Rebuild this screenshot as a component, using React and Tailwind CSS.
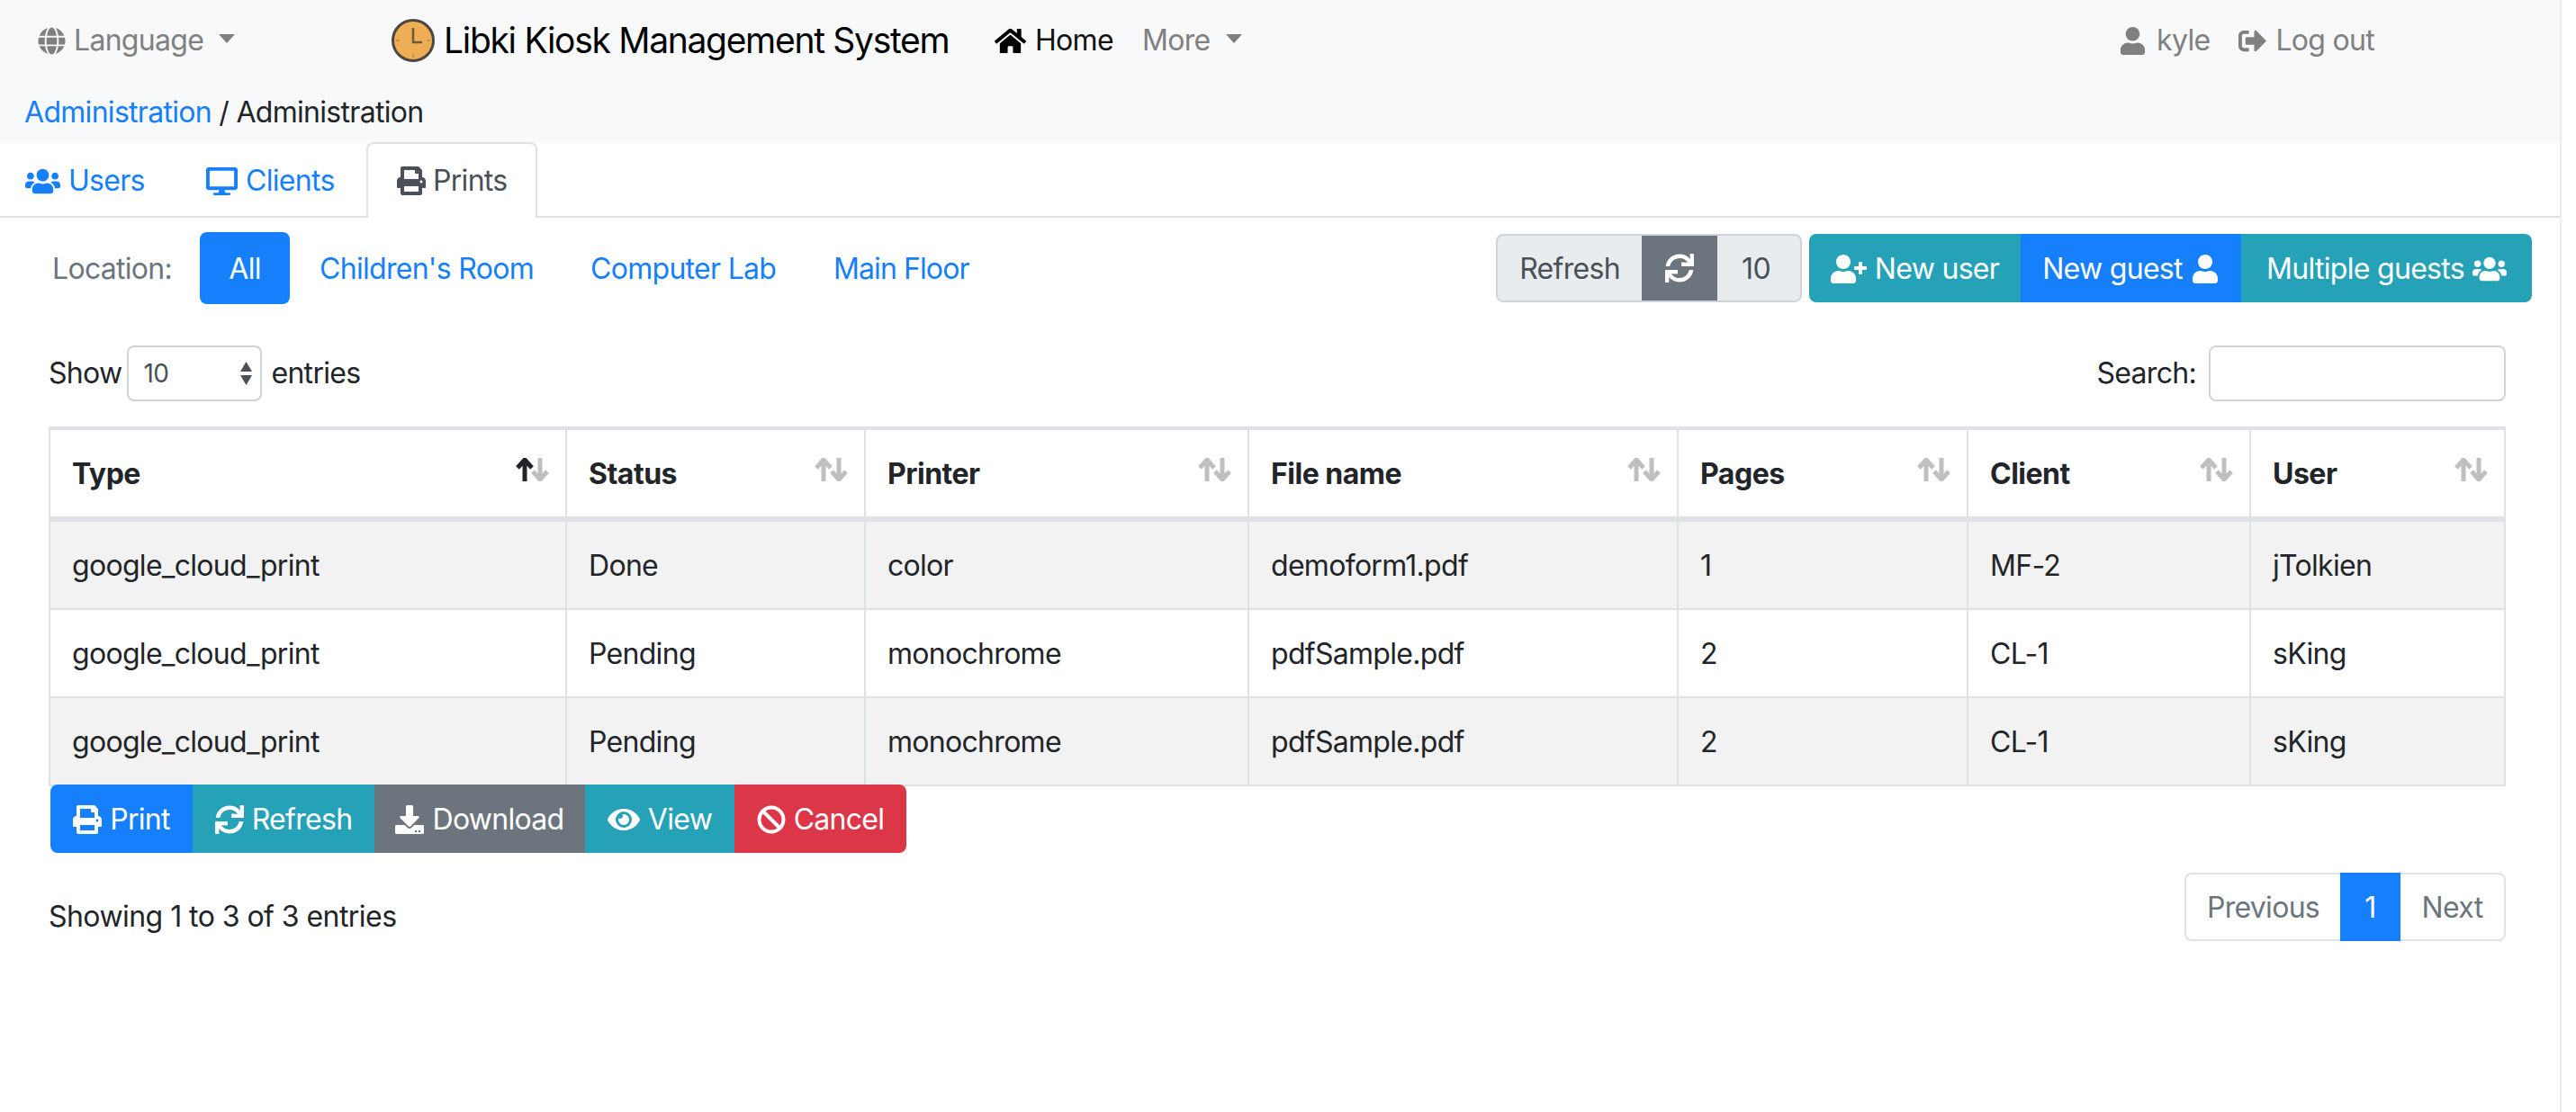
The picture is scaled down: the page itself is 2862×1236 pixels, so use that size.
import React from "react"
import {
  FaBan,
  FaDesktop,
  FaDownload,
  FaEye,
  FaGlobe,
  FaHome,
  FaPrint,
  FaSignOutAlt,
  FaSync,
  FaUser,
  FaUserPlus,
  FaUsers,
} from "react-icons/fa"

const columns = [
  { name: "Type", width: "w-[576px]", sorted: true },
  { name: "Status", width: "w-[332px]" },
  { name: "Printer", width: "w-[426px]" },
  { name: "File name", width: "w-[477px]" },
  { name: "Pages", width: "w-[322px]" },
  { name: "Client", width: "w-[314px]" },
  { name: "User", width: "w-[283px]" },
]

const rows = [
  ["google_cloud_print", "Done", "color", "demoform1.pdf", "1", "MF-2", "jTolkien"],
  ["google_cloud_print", "Pending", "monochrome", "pdfSample.pdf", "2", "CL-1", "sKing"],
  ["google_cloud_print", "Pending", "monochrome", "pdfSample.pdf", "2", "CL-1", "sKing"],
]

function Caret({ className }) {
  return <span className={`w-0 h-0 -mt-[4px] border-x-[9px] border-x-transparent border-t-[10px] border-t-[#7e8081] ${className}`} />
}

function ClockLogo() {
  return (
    <svg width="50" height="50" viewBox="0 0 50 50" className="shrink-0">
      <circle cx="25" cy="25" r="22.5" fill="#efae56" stroke="#4a4640" strokeWidth="3" />
      <path d="M25 11v16h10" fill="none" stroke="#6b5a3a" strokeWidth="2.5" />
      <path d="M25 40v4M6 25h4M40 25h4" fill="none" stroke="#c99247" strokeWidth="2" />
    </svg>
  )
}

function SortArrows({ sorted }) {
  return (
    <svg width="37" height="26" viewBox="0 0 37 26" className={sorted ? "text-[#212529]" : "text-[#bdbfc1]"}>
      <path d="M10 26V5M2 11l8-9 8 9" fill="none" stroke="currentColor" strokeWidth="5" />
      <path d="M27 0v21M19 15l8 9 8-9" fill="none" stroke="#bdbfc1" strokeWidth="5" />
    </svg>
  )
}

function SelectArrows() {
  return (
    <svg width="13" height="26" viewBox="0 0 13 26" className="text-[#495057]">
      <path d="M6.5 0L13 11H0zM6.5 26L0 15h13z" fill="currentColor" />
    </svg>
  )
}

function Navbar() {
  return (
    <div className="h-[90px] flex items-center text-[32px] text-[#7e8081]">
      <div className="w-[434px] pl-[42px] flex items-center shrink-0">
        <FaGlobe className="text-[31px]" />
        <span className="ml-[9px]">Language</span>
        <Caret className="ml-[17px]" />
      </div>
      <ClockLogo />
      <span className="ml-[9px] w-[612px] text-[39px] tracking-[-1.3px] whitespace-nowrap text-black shrink-0">Libki Kiosk Management System</span>
      <FaHome className="text-[35px] text-black shrink-0" />
      <span className="ml-[10px] w-[119px] text-[#111] shrink-0">Home</span>
      <span>More</span>
      <Caret className="ml-[18px]" />
      <div className="ml-auto pr-[206px] flex items-center">
        <FaUser className="text-[31px]" />
        <span className="ml-[11px]">kyle</span>
        <FaSignOutAlt className="ml-[32px] text-[31px]" />
        <span className="ml-[10px]">Log out</span>
      </div>
    </div>
  )
}

function Tabs() {
  return (
    <div className="h-[84px] flex border-b-2 border-[#dee2e6] text-[32px] text-[#167ffc]">
      <a className="w-[197px] h-[84px] pl-7 pt-[2px] flex items-center gap-[9px]">
        <FaUsers className="text-[39px]" />
        Users
      </a>
      <a className="w-[210px] h-[84px] pl-8 pt-[2px] flex items-center gap-[9px]">
        <FaDesktop className="text-[35px]" />
        Clients
      </a>
      <a className="w-[190px] h-[84px] pl-8 flex items-center gap-[8px] bg-white border-2 border-b-0 border-[#dee2e6] rounded-t-lg text-[#495057]">
        <FaPrint className="text-[32px]" />
        Prints
      </a>
    </div>
  )
}

function Toolbar() {
  return (
    <div className="mt-4 h-20 pl-[58px] pr-[31px] flex items-center text-[32px]">
      <span className="w-[164px] pt-[2px] text-[#6c757d]">Location:</span>
      <a className="w-[100px] h-20 pt-[2px] flex items-center justify-center rounded-lg bg-[#167ffc] text-white">All</a>
      <a className="w-[302px] pl-[33px] pt-[2px] text-[#167ffc]">Children's Room</a>
      <a className="w-[272px] pl-[32px] pt-[2px] text-[#167ffc]">Computer Lab</a>
      <a className="pl-[30px] pt-[2px] tracking-[-0.9px] text-[#167ffc]">Main Floor</a>
      <div className="ml-auto flex h-[76px]">
        <div className="flex rounded-lg border-2 border-[#ced4da] bg-[#e9ecef] text-[#495057] overflow-hidden">
          <span className="w-[160px] pt-[2px] flex items-center justify-center">Refresh</span>
          <span className="w-[84px] -my-[2px] flex items-center justify-center bg-[#6c757d] text-white">
            <FaSync className="text-[32px]" />
          </span>
          <span className="w-[92px] pt-[2px] pr-[6px] flex items-center justify-center">10</span>
        </div>
        <div className="ml-2 flex rounded-lg overflow-hidden text-white">
          <a className="w-[235px] pt-[2px] flex items-center justify-center gap-[9px] bg-[#26a2b8]">
            <FaUserPlus className="text-[40px]" />
            New user
          </a>
          <a className="w-[245px] pt-[2px] flex items-center justify-center gap-[9px] bg-[#167ffc]">
            New guest
            <FaUser className="text-[32px]" />
          </a>
          <a className="w-[323px] pt-[2px] flex items-center justify-center gap-[9px] bg-[#26a2b8]">
            Multiple guests
            <FaUsers className="text-[38px]" />
          </a>
        </div>
      </div>
    </div>
  )
}

function TableFilters() {
  return (
    <div className="mt-[46px] h-[62px] ml-[54px] mr-[60px] flex items-center justify-between text-[32px] text-[#212529]">
      <div className="flex items-center">
        <span>Show</span>
        <div className="ml-[6px] w-[150px] h-[62px] pl-4 pr-[9px] flex items-center justify-between rounded-lg border-2 border-[#ced4da] text-[28px] text-[#495057]">
          10
          <SelectArrows />
        </div>
        <span className="ml-[10px]">entries</span>
      </div>
      <div className="flex items-center">
        <span>Search:</span>
        <input className="ml-[14px] w-[330px] h-[62px] rounded-lg border-2 border-[#ced4da] bg-white" />
      </div>
    </div>
  )
}

function PrintsTable() {
  return (
    <table className="mt-7 ml-[54px] w-[2730px] table-fixed border-separate border-spacing-0 text-[32px] text-[#212529]">
      <thead>
        <tr>
          {columns.map((col, i) => (
            <th
              key={col.name}
              className={`${col.width} h-[106px] px-6 pt-[2px] text-left font-bold tracking-[-0.5px] border-t-4 border-b-[6px] border-r-2 border-[#dee2e6] ${i === 0 ? "border-l-2" : ""}`}
            >
              <div className="flex items-center justify-between">
                {col.name}
                <span className="-mr-[6px] -mt-[11px] flex"><SortArrows sorted={col.sorted} /></span>
              </div>
            </th>
          ))}
        </tr>
      </thead>
      <tbody>
        {rows.map((row, r) => (
          <tr key={r} className={r % 2 === 0 ? "bg-[#f2f2f2]" : "bg-white"}>
            {row.map((cell, i) => (
              <td
                key={i}
                className={`h-[98px] px-6 pt-[2px] border-b-2 border-r-2 border-[#dee2e6] ${i === 0 ? "border-l-2" : ""}`}
              >
                {cell}
              </td>
            ))}
          </tr>
        ))}
      </tbody>
    </table>
  )
}

function RowActions() {
  return (
    <div className="-mt-[2px] ml-[56px] w-fit h-[76px] flex rounded-lg overflow-hidden text-[32px] text-white relative">
      <a className="w-[158px] pt-[2px] flex items-center justify-center gap-[9px] bg-[#167ffc]">
        <FaPrint className="text-[32px]" />
        Print
      </a>
      <a className="w-[202px] pt-[2px] flex items-center justify-center gap-[9px] bg-[#26a2b8]">
        <FaSync className="text-[32px]" />
        Refresh
      </a>
      <a className="w-[234px] pt-[2px] flex items-center justify-center gap-[9px] bg-[#6c757d]">
        <FaDownload className="text-[32px]" />
        Download
      </a>
      <a className="w-[166px] pt-[2px] flex items-center justify-center gap-[9px] bg-[#26a2b8]">
        <FaEye className="text-[36px]" />
        View
      </a>
      <a className="w-[191px] pt-[2px] flex items-center justify-center gap-[9px] bg-[#dc3749]">
        <FaBan className="text-[32px]" />
        Cancel
      </a>
    </div>
  )
}

function TableFooter() {
  return (
    <div className="mt-[22px] ml-[54px] mr-[60px] flex items-start justify-between text-[32px]">
      <span className="mt-[25px] tracking-[-0.55px] text-[#212529]">Showing 1 to 3 of 3 entries</span>
      <div className="flex h-[76px]">
        <a className="w-[173px] pt-[2px] flex items-center justify-center rounded-l-lg border-2 border-r-0 border-[#dee2e6] text-[#6c757d]">Previous</a>
        <a className="w-[67px] pt-[2px] flex items-center justify-center bg-[#167ffc] text-white">1</a>
        <a className="w-[117px] pt-[2px] flex items-center justify-center rounded-r-lg border-2 border-l-0 border-[#dee2e6] text-[#6c757d]">Next</a>
      </div>
    </div>
  )
}

export default function App() {
  return (
    <div className="h-[1236px] flex overflow-hidden bg-white leading-[48px] tracking-[-0.7px] font-['Inter','Liberation_Sans',sans-serif]">
      <div className="w-[2844px] shrink-0">
        <div className="h-[158px] bg-[#f8f9fa]">
          <Navbar />
          <div className="pl-[27px] pt-[11px] text-[32px] text-[#212529]">
            <a className="text-[#167ffc]">Administration</a> / Administration
          </div>
        </div>
        <Tabs />
        <Toolbar />
        <TableFilters />
        <PrintsTable />
        <RowActions />
        <TableFooter />
      </div>
      <div className="flex-1 border-l-2 border-[#ececec] bg-white" />
    </div>
  )
}
